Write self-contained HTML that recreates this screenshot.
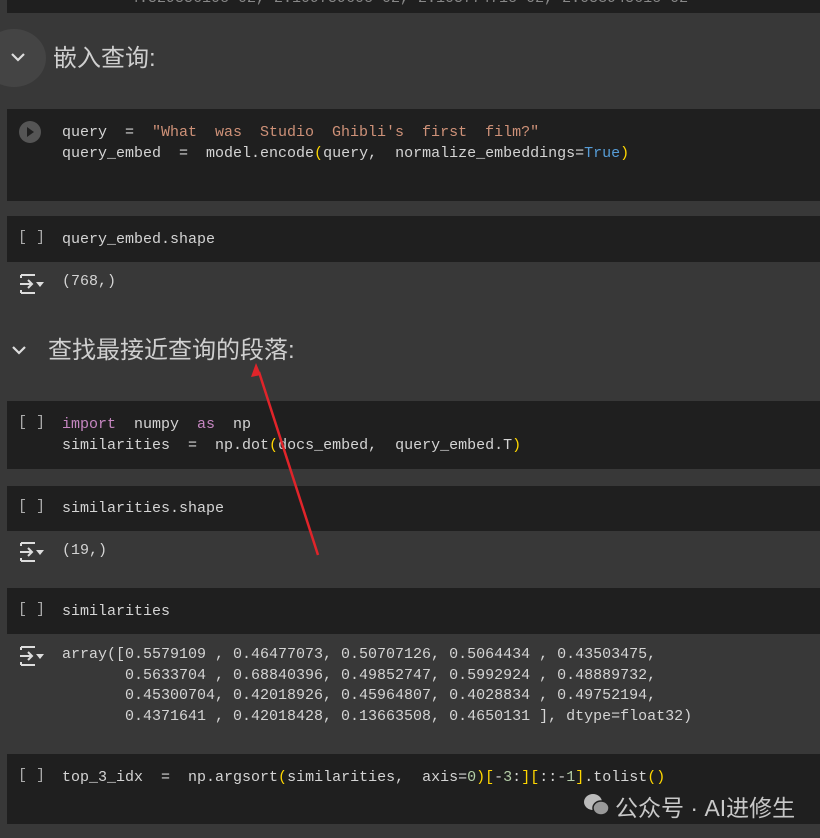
<!DOCTYPE html><html><head><meta charset="utf-8"><style>
body{margin:0;width:820px;height:838px;background:#383838;position:relative;overflow:hidden;font-family:"Liberation Mono","Noto Sans CJK SC",monospace;color:#d4d4d4}
.c{position:absolute;left:7px;right:0;background:#1f1f1f}
.t{position:absolute;font-size:15px;white-space:pre;line-height:21px}
.b{position:absolute;left:18px;font-size:15px;color:#aaa;white-space:pre}
.h{position:absolute;font-family:"Liberation Sans","Noto Sans CJK SC",sans-serif;font-size:24px;color:#cfcfcf}
.s{color:#ce9178}.y{color:#ffd700}.bl{color:#569cd6}.p{color:#c586c0}.g{color:#b5cea8}
svg.o{position:absolute;left:18px}
</style></head><body>
<div class="c" style="top:0;height:13px"></div>
<div class="t" style="left:130px;top:-12px;color:#888">4.52955610e-02, 2.10975960e-02, 2.10577471e-02, 2.05394561e-02</div>
<div style="position:absolute;left:-18px;top:29px;width:64px;height:58px;border-radius:50%;background:#444"></div>
<svg style="position:absolute;left:10px;top:51px" width="16" height="12"><path d="M2 3l6 6 6-6" stroke="#ddd" stroke-width="2.2" fill="none"/></svg>
<div class="h" style="left:53px;top:38px">嵌入查询:</div>
<div class="c" style="top:109px;height:92px"></div>
<div style="position:absolute;left:19px;top:121px;width:22px;height:22px;border-radius:50%;background:#555"></div>
<svg style="position:absolute;left:19px;top:121px" width="22" height="22"><path d="M8 6l7 5-7 5z" fill="#1f1f1f"/></svg>
<div class="t" style="left:62px;top:122px">query  =  <span class="s">"What  was  Studio  Ghibli's  first  film?"</span>
query_embed  =  model.encode<span class="y">(</span>query,  normalize_embeddings=<span class="bl">True</span><span class="y">)</span></div>
<div class="c" style="top:216px;height:46px"></div>
<div class="b" style="top:229px">[ ]</div>
<div class="t" style="left:62px;top:229px">query_embed.shape</div>
<svg class="o" style="top:273px" width="28" height="22"><path d="M3 2h14M3 20h14M3 2v3M3 20v-3M2 11h12M10 7l4 4-4 4" stroke="#ddd" stroke-width="2" fill="none"/><path d="M18 9h8l-4 5z" fill="#ddd"/></svg>
<div class="t" style="left:62px;top:271px">(768,)</div>
<svg style="position:absolute;left:11px;top:344px" width="16" height="12"><path d="M2 3l6 6 6-6" stroke="#ddd" stroke-width="2.2" fill="none"/></svg>
<div class="h" style="left:48px;top:330px">查找最接近查询的段落:</div>
<div class="c" style="top:401px;height:68px"></div>
<div class="b" style="top:414px">[ ]</div>
<div class="t" style="left:62px;top:414px"><span class="p">import</span>  numpy  <span class="p">as</span>  np
similarities  =  np.dot<span class="y">(</span>docs_embed,  query_embed.T<span class="y">)</span></div>
<div class="c" style="top:486px;height:45px"></div>
<div class="b" style="top:498px">[ ]</div>
<div class="t" style="left:62px;top:498px">similarities.shape</div>
<svg class="o" style="top:541px" width="28" height="22"><path d="M3 2h14M3 20h14M3 2v3M3 20v-3M2 11h12M10 7l4 4-4 4" stroke="#ddd" stroke-width="2" fill="none"/><path d="M18 9h8l-4 5z" fill="#ddd"/></svg>
<div class="t" style="left:62px;top:540px">(19,)</div>
<div class="c" style="top:588px;height:46px"></div>
<div class="b" style="top:601px">[ ]</div>
<div class="t" style="left:62px;top:601px">similarities</div>
<svg class="o" style="top:645px" width="28" height="22"><path d="M3 2h14M3 20h14M3 2v3M3 20v-3M2 11h12M10 7l4 4-4 4" stroke="#ddd" stroke-width="2" fill="none"/><path d="M18 9h8l-4 5z" fill="#ddd"/></svg>
<div class="t" style="left:62px;top:645px;line-height:20.7px">array([0.5579109 , 0.46477073, 0.50707126, 0.5064434 , 0.43503475,
       0.5633704 , 0.68840396, 0.49852747, 0.5992924 , 0.48889732,
       0.45300704, 0.42018926, 0.45964807, 0.4028834 , 0.49752194,
       0.4371641 , 0.42018428, 0.13663508, 0.4650131 ], dtype=float32)</div>
<div class="c" style="top:754px;height:70px"></div>
<div class="b" style="top:767px">[ ]</div>
<div class="t" style="left:62px;top:767px">top_3_idx  =  np.argsort<span class="y">(</span>similarities,  axis=<span class="g">0</span><span class="y">)</span><span class="y">[</span>-<span class="g">3</span>:<span class="y">]</span><span class="y">[</span>::-<span class="g">1</span><span class="y">]</span>.tolist<span class="y">()</span></div>
<svg style="position:absolute;left:582px;top:792px" width="30" height="26"><ellipse cx="11" cy="10" rx="9" ry="8" fill="#bbb"/><ellipse cx="19" cy="16" rx="8" ry="7" fill="#999" stroke="#1f1f1f" stroke-width="1.5"/></svg>
<div class="h" style="left:615px;top:789px;font-size:23px;color:#c8c8c8">公众号 · AI进修生</div>
<svg style="position:absolute;left:0;top:0" width="820" height="838"><line x1="318" y1="555" x2="259" y2="372" stroke="#e0242a" stroke-width="2.5"/><path d="M256 363l-5 14 10-2z" fill="#e0242a"/></svg>
</body></html>
